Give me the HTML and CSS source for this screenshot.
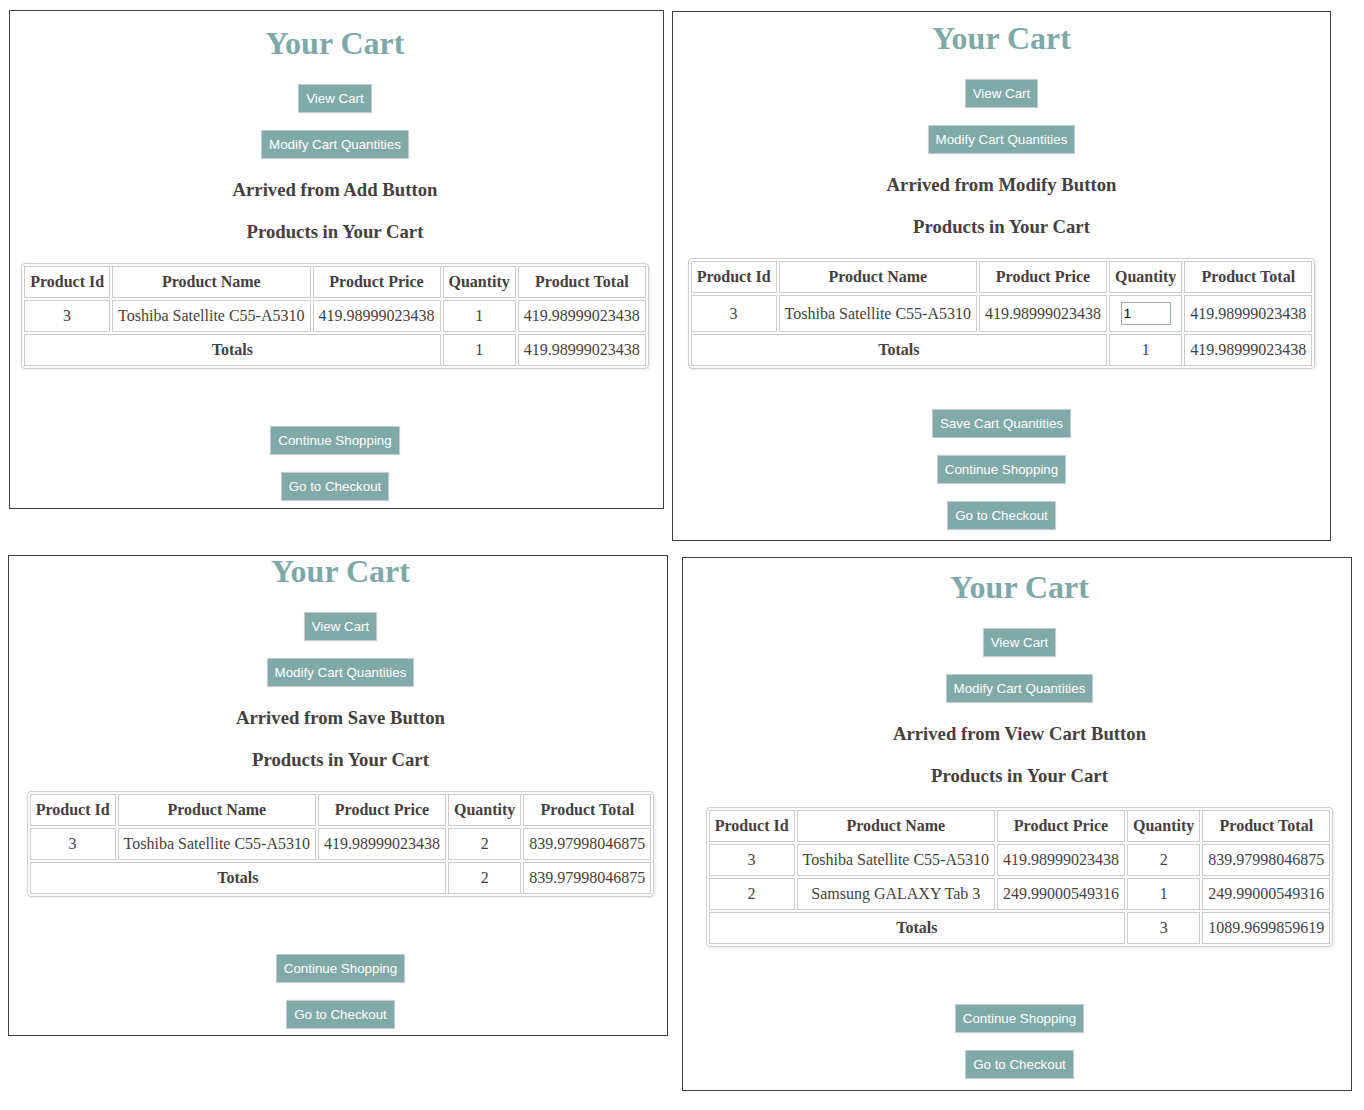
FILE: index.html
```html
<!DOCTYPE html>
<html lang="en">
<head>
<meta charset="utf-8">
<title>Your Cart</title>
<link rel="stylesheet" href="styles.css">
</head>
<body>
<div class="desktop">

  <section class="panel panel--add">
    <h1 class="title">Your Cart</h1>
    <div class="btn-stack">
      <button class="btn">View Cart</button>
      <button class="btn">Modify Cart Quantities</button>
    </div>
    <h3 class="subtitle">Arrived from Add Button</h3>
    <h3 class="subtitle">Products in Your Cart</h3>
    <table class="cart">
      <tr><th>Product Id</th><th>Product Name</th><th>Product Price</th><th>Quantity</th><th>Product Total</th></tr>
      <tr><td>3</td><td>Toshiba Satellite C55-A5310</td><td>419.98999023438</td><td>1</td><td>419.98999023438</td></tr>
      <tr><th colspan="3">Totals</th><td>1</td><td>419.98999023438</td></tr>
    </table>
    <div class="btn-stack actions">
      <button class="btn">Continue Shopping</button>
      <button class="btn">Go to Checkout</button>
    </div>
  </section>

  <section class="panel panel--modify">
    <h1 class="title">Your Cart</h1>
    <div class="btn-stack">
      <button class="btn">View Cart</button>
      <button class="btn">Modify Cart Quantities</button>
    </div>
    <h3 class="subtitle">Arrived from Modify Button</h3>
    <h3 class="subtitle">Products in Your Cart</h3>
    <table class="cart">
      <tr><th>Product Id</th><th>Product Name</th><th>Product Price</th><th>Quantity</th><th>Product Total</th></tr>
      <tr><td>3</td><td>Toshiba Satellite C55-A5310</td><td>419.98999023438</td><td><input class="qty" type="text" value="1"></td><td>419.98999023438</td></tr>
      <tr><th colspan="3">Totals</th><td>1</td><td>419.98999023438</td></tr>
    </table>
    <div class="btn-stack actions actions--save">
      <button class="btn">Save Cart Quantities</button>
      <button class="btn">Continue Shopping</button>
      <button class="btn">Go to Checkout</button>
    </div>
  </section>

  <section class="panel panel--save">
    <h1 class="title">Your Cart</h1>
    <div class="btn-stack">
      <button class="btn">View Cart</button>
      <button class="btn">Modify Cart Quantities</button>
    </div>
    <h3 class="subtitle">Arrived from Save Button</h3>
    <h3 class="subtitle">Products in Your Cart</h3>
    <table class="cart">
      <tr><th>Product Id</th><th>Product Name</th><th>Product Price</th><th>Quantity</th><th>Product Total</th></tr>
      <tr><td>3</td><td>Toshiba Satellite C55-A5310</td><td>419.98999023438</td><td>2</td><td>839.97998046875</td></tr>
      <tr><th colspan="3">Totals</th><td>2</td><td>839.97998046875</td></tr>
    </table>
    <div class="btn-stack actions">
      <button class="btn">Continue Shopping</button>
      <button class="btn">Go to Checkout</button>
    </div>
  </section>

  <section class="panel panel--view">
    <h1 class="title">Your Cart</h1>
    <div class="btn-stack">
      <button class="btn">View Cart</button>
      <button class="btn">Modify Cart Quantities</button>
    </div>
    <h3 class="subtitle">Arrived from View Cart Button</h3>
    <h3 class="subtitle">Products in Your Cart</h3>
    <table class="cart">
      <tr><th>Product Id</th><th>Product Name</th><th>Product Price</th><th>Quantity</th><th>Product Total</th></tr>
      <tr><td>3</td><td>Toshiba Satellite C55-A5310</td><td>419.98999023438</td><td>2</td><td>839.97998046875</td></tr>
      <tr><td>2</td><td>Samsung GALAXY Tab 3</td><td>249.99000549316</td><td>1</td><td>249.99000549316</td></tr>
      <tr><th colspan="3">Totals</th><td>3</td><td>1089.9699859619</td></tr>
    </table>
    <div class="btn-stack actions">
      <button class="btn">Continue Shopping</button>
      <button class="btn">Go to Checkout</button>
    </div>
  </section>

</div>
</body>
</html>
```

FILE: styles.css
```css
html, body {
  margin: 0;
  padding: 0;
  background: #ffffff;
}

.desktop {
  position: relative;
  width: 1364px;
  height: 1110px;
  font-family: "Liberation Serif", "Times New Roman", serif;
  color: #463f3f;
}

.panel {
  position: absolute;
  box-sizing: border-box;
  border: 1px solid #3f3f3f;
  background: #ffffff;
  display: flex;
  flex-direction: column;
  align-items: center;
}

.panel--add {
  left: 9px;
  top: 10px;
  width: 655px;
  height: 499px;
  padding: 14px 3px 0 0;
}

.panel--modify {
  left: 672px;
  top: 11px;
  width: 659px;
  height: 530px;
  padding: 8px 0 0 0;
}

.panel--save {
  left: 8px;
  top: 555px;
  width: 660px;
  height: 481px;
  padding: 0 0 0 5px;
}

.panel--save .title {
  line-height: 30px;
  margin-bottom: 26px;
}

.panel--view {
  left: 682px;
  top: 557px;
  width: 670px;
  height: 534px;
  padding: 11px 0 0 5px;
}

.title {
  margin: 0 0 22px;
  font-size: 32px;
  line-height: 37px;
  font-weight: bold;
  color: #7fa9a8;
}

.btn-stack {
  display: flex;
  flex-direction: column;
  align-items: center;
  gap: 17px;
}

.btn {
  box-sizing: border-box;
  height: 29px;
  margin: 0;
  padding: 6px 7px;
  border: 1px solid #c9cccc;
  background: #7faaa9;
  color: #ffffff;
  font-family: "Liberation Sans", Arial, sans-serif;
  font-size: 13.333px;
  line-height: 15px;
  box-shadow: 0 0 2px rgba(0, 0, 0, 0.08);
  cursor: pointer;
}

.subtitle {
  margin: 20px 0 0;
  font-size: 18.72px;
  line-height: 22px;
  font-weight: bold;
}

.cart {
  margin-top: 20px;
  border: 1px solid #cfcfcf;
  border-radius: 4px;
  border-spacing: 2px;
  box-shadow: 1px 1px 3px rgba(0, 0, 0, 0.10);
  font-size: 16px;
}

.cart th,
.cart td {
  border: 1px solid #cccccc;
  padding: 6px 5px;
  line-height: 18px;
  text-align: center;
  white-space: nowrap;
}

.cart th {
  font-weight: bold;
}

.qty {
  display: block;
  box-sizing: border-box;
  width: 50px;
  height: 23px;
  margin: 0 auto;
  padding: 0 2px;
  border: 1px solid #a9a9a9;
  border-right-color: #8fb3b3;
  font-family: "Liberation Sans", Arial, sans-serif;
  font-size: 13.333px;
  color: #000000;
  background: #ffffff;
}

.actions {
  margin-top: 57px;
}

.actions--save {
  margin-top: 40px;
}
```
